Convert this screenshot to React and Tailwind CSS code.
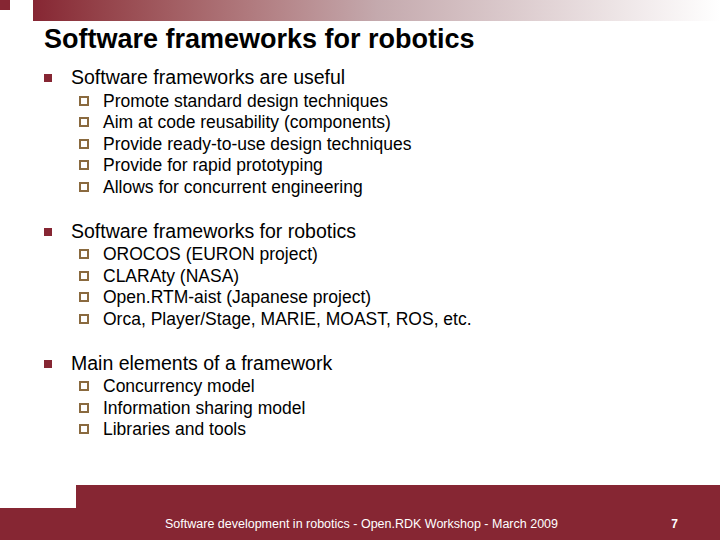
const groups = [
  { title: 'Software frameworks are useful', items: ['Promote standard design techniques', 'Aim at code reusability (components)', 'Provide ready-to-use design techniques', 'Provide for rapid prototyping', 'Allows for concurrent engineering'] },
  { title: 'Software frameworks for robotics', items: ['OROCOS (EURON project)', 'CLARAty (NASA)', 'Open.RTM-aist (Japanese project)', 'Orca, Player/Stage, MARIE, MOAST, ROS, etc.'] },
  { title: 'Main elements of a framework', items: ['Concurrency model', 'Information sharing model', 'Libraries and tools'] },
];

export default function App() {
  return (
    <div className="w-[720px] h-[540px] bg-white flex flex-col overflow-hidden" style={{ fontFamily: '"Liberation Sans", Arial, sans-serif' }}>
      <div className="flex h-[21px] shrink-0">
        <div className="w-[10px] h-[10px] bg-[#862633]" />
        <div className="w-[23px]" />
        <div className="flex-1 bg-gradient-to-r from-[#862633] via-[#c4a9ad] to-white" />
      </div>
      <h1 className="ml-[44px] mt-[2px] text-[27px] font-bold text-black leading-[32px]">Software frameworks for robotics</h1>
      <div className="flex flex-col gap-[22px] mt-[11px] ml-[44px]">
        {groups.map((g) => (
          <div key={g.title}>
            <div className="flex items-center h-[24px]">
              <div className="w-[8px] h-[8px] bg-[#862633]" />
              <span className="ml-[19px] text-[19.5px] text-black">{g.title}</span>
            </div>
            <div className="ml-[35px]">
              {g.items.map((it) => (
                <div key={it} className="flex items-center h-[21.5px]">
                  <div className="w-[10px] h-[10px] border-2 border-[#8a6a3f]" />
                  <span className="ml-[14px] text-[17.5px] text-black">{it}</span>
                </div>
              ))}
            </div>
          </div>
        ))}
      </div>
      <div className="mt-auto flex flex-col">
        <div className="flex h-[23px]">
          <div className="w-[76px]" />
          <div className="flex-1 bg-[#862633]" />
        </div>
        <div className="h-[32px] bg-[#862633] flex items-center text-white">
          <span className="ml-[165px] text-[12.5px]">Software development in robotics - Open.RDK Workshop - March 2009</span>
          <span className="ml-auto mr-[42px] text-[12px] font-bold">7</span>
        </div>
      </div>
    </div>
  );
}
